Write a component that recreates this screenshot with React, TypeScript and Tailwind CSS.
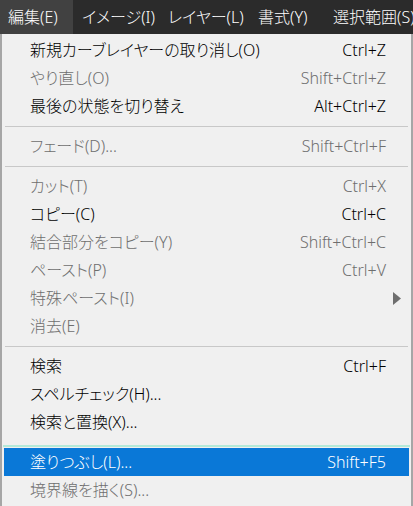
type Item = {
  label: string;
  shortcut?: string;
  disabled?: boolean;
  submenu?: boolean;
  active?: boolean;
};

type Entry = Item | "sep" | "sep-active";

const menubar = [
  { label: "編集(E)", w: "w-[73px] bg-[#414141] pl-[8px]" },
  { label: "イメージ(I)", w: "w-[86px] pl-[9px]" },
  { label: "レイヤー(L)", w: "w-[90px] pl-[9px]" },
  { label: "書式(Y)", w: "w-[75px] pl-[9px]" },
  { label: "選択範囲(S)", w: "w-[100px] pl-[9px]" },
];

const entries: Entry[] = [
  { label: "新規カーブレイヤーの取り消し(O)", shortcut: "Ctrl+Z" },
  { label: "やり直し(O)", shortcut: "Shift+Ctrl+Z", disabled: true },
  { label: "最後の状態を切り替え", shortcut: "Alt+Ctrl+Z" },
  "sep",
  { label: "フェード(D)...", shortcut: "Shift+Ctrl+F", disabled: true },
  "sep",
  { label: "カット(T)", shortcut: "Ctrl+X", disabled: true },
  { label: "コピー(C)", shortcut: "Ctrl+C" },
  { label: "結合部分をコピー(Y)", shortcut: "Shift+Ctrl+C", disabled: true },
  { label: "ペースト(P)", shortcut: "Ctrl+V", disabled: true },
  { label: "特殊ペースト(I)", disabled: true, submenu: true },
  { label: "消去(E)", disabled: true },
  "sep",
  { label: "検索", shortcut: "Ctrl+F" },
  { label: "スペルチェック(H)..." },
  { label: "検索と置換(X)..." },
  "sep-active",
  { label: "塗りつぶし(L)...", shortcut: "Shift+F5", active: true },
  { label: "境界線を描く(S)...", disabled: true },
];

function Row({ item }: { item: Item }) {
  const color = item.active
    ? "bg-[#0a78d7] text-white"
    : item.disabled
      ? "text-[#6e6e6e]"
      : "text-black";
  return (
    <div className={`flex items-center h-[28px] mx-[2px] pl-[26px] pr-[23px] ${color}`}>
      <span className="flex-1 whitespace-nowrap">{item.label}</span>
      {item.shortcut && <span className="whitespace-nowrap">{item.shortcut}</span>}
      {item.submenu && (
        <svg width="8" height="13" viewBox="0 0 8 13" className="-mr-[15px]">
          <path d="M0 0 L8 6.5 L0 13 Z" fill="#6e6e6e" />
        </svg>
      )}
    </div>
  );
}

export default function App() {
  return (
    <div
      className="w-[413px] h-[506px] overflow-hidden bg-[#f0f0f0] text-[16px] leading-none font-light"
      style={{
        fontFamily: '"Noto Sans", "Noto Sans CJK JP", sans-serif',
        fontFeatureSettings: '"palt"',
      }}
    >
      <div className="flex h-[34px] bg-[#2b2b2b] text-white items-center">
        {menubar.map((m) => (
          <div key={m.label} className={`h-full shrink-0 flex items-center whitespace-nowrap ${m.w}`}>
            {m.label}
          </div>
        ))}
      </div>

      <div className="h-[472px] border-l-2 border-r-2 border-[#a6a6a6] pt-[2px]">
        {entries.map((e, i) =>
          e === "sep" ? (
            <div key={i} className="h-[12px] flex items-center px-[3px]">
              <div className="h-px w-full bg-[#c8c8c8]" />
            </div>
          ) : e === "sep-active" ? (
            <div key={i} className="h-[12px] flex items-end px-[1px] pb-[1px]">
              <div className="h-[2px] w-full bg-[#b4ead9]" />
            </div>
          ) : (
            <Row key={i} item={e} />
          )
        )}
      </div>
    </div>
  );
}
